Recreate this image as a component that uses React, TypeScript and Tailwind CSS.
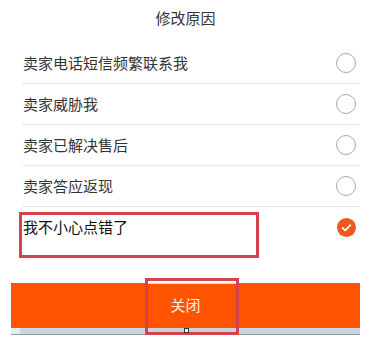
import { type FC } from "react";

const reasons = [
  "卖家电话短信频繁联系我",
  "卖家威胁我",
  "卖家已解决售后",
  "卖家答应返现",
  "我不小心点错了",
];

const selected = 4;

const Radio: FC<{ checked: boolean }> = ({ checked }) =>
  checked ? (
    <span className="flex h-[19px] w-[19px] items-center justify-center rounded-full bg-[#f1581f]">
      <svg viewBox="0 0 20 20" className="h-[13px] w-[13px]" fill="none">
        <path
          d="M4 10.5l4 3.8L16 6.5"
          stroke="#fff"
          strokeWidth="2.6"
          strokeLinecap="round"
          strokeLinejoin="round"
        />
      </svg>
    </span>
  ) : (
    <span className="block h-[20px] w-[20px] rounded-full border border-[#a8a8a8]" />
  );

const App: FC = () => {
  return (
    <div
      className="h-[347px] w-[390px] bg-white"
      style={{ fontFamily: '"Noto Sans CJK SC", "Noto Sans", sans-serif' }}
    >
      <div className="ml-[11px] w-[349px]">
        <div className="flex h-[43px] justify-center pt-[8px] text-[15px] leading-[20px] text-[#333]">
          修改原因
        </div>
        <ul className="ml-[11px]">
          {reasons.map((reason, idx) => {
            const isLast = idx === reasons.length - 1;
            return (
              <li
                key={reason}
                className={
                  isLast
                    ? "relative flex h-[40px] items-center justify-between pr-[4px]"
                    : "flex h-[41px] items-center justify-between border-b border-[#e6e6e6] pr-[4px]"
                }
              >
                <span
                  className={
                    isLast
                      ? "pl-[1px] text-[15px] text-[#111]"
                      : "pl-[1px] text-[15px] text-[#333]"
                  }
                >
                  {reason}
                </span>
                <span className="mr-[0px] flex w-[20px] justify-center">
                  <Radio checked={idx === selected} />
                </span>
                {isLast && (
                  <span className="pointer-events-none absolute left-[-3px] top-[5px] h-[46px] w-[240px] border-[3px] border-[#d4434b]" />
                )}
              </li>
            );
          })}
        </ul>
        <div className="relative mt-[36px]">
          <button className="flex h-[45px] w-full items-center justify-center bg-[#fe5402] text-[15px] text-[#ffeedd]">
            关闭
          </button>
          <div className="flex h-[7px] border-b border-[#8d9ba6] bg-[#c9d4dd]">
            <div className="w-[9px] bg-[#e6ecf0]" />
          </div>
          <span className="pointer-events-none absolute left-[134px] top-[-5px] h-[57px] w-[94px] border-[3px] border-[#d4434b]">
            <span className="absolute left-0 right-0 top-[2px] h-[1px] bg-[#ffd2b8]" />
          </span>
          <span className="absolute left-[173px] top-[45px] h-[5px] w-[5px] border border-[#333] bg-white" />
        </div>
      </div>
    </div>
  );
};

export default App;
